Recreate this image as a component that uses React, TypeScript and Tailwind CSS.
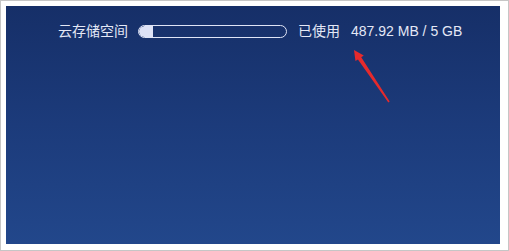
import React from 'react';

export default function App() {
  const used = 487.92;
  const total = 5 * 1024;
  const pct = Math.max((used / total) * 100, 9);

  return (
    <div className="w-[509px] h-[251px] border border-[#c6c6c6] bg-white pl-[5px] pt-[5px]">
      <div
        className="relative w-[494px] h-[238px] bg-gradient-to-b from-[#162f68] via-[#1c3b7b] to-[#22478b] pl-[52px] pt-[17px]"
        style={{ fontFamily: '"Liberation Sans", "Noto Sans CJK SC", sans-serif' }}
      >
        <div className="flex items-center h-[17px] text-[14px] text-[#e4e8f6]">
          <span>云存储空间</span>
          <div className="ml-[10px] w-[149px] h-[13px] rounded-full border border-[#dfe4f6] overflow-hidden">
            <div className="h-full bg-[#dde2f6] rounded-l-full" style={{ width: `${pct}%` }} />
          </div>
          <span className="ml-[11px]">已使用</span>
          <span className="ml-[11px]">{used} MB / 5 GB</span>
        </div>

        {/* 红色箭头标注 */}
        <svg className="absolute left-[334px] top-[32px]" width="56" height="70" viewBox="0 0 56 70">
          <polygon
            points="14,12 23.75,17.5 21.26,19.18 49.66,63.55 48.34,64.45 17.94,21.42 15.45,23.1"
            fill="#e62a2c"
          />
        </svg>
      </div>
    </div>
  );
}
